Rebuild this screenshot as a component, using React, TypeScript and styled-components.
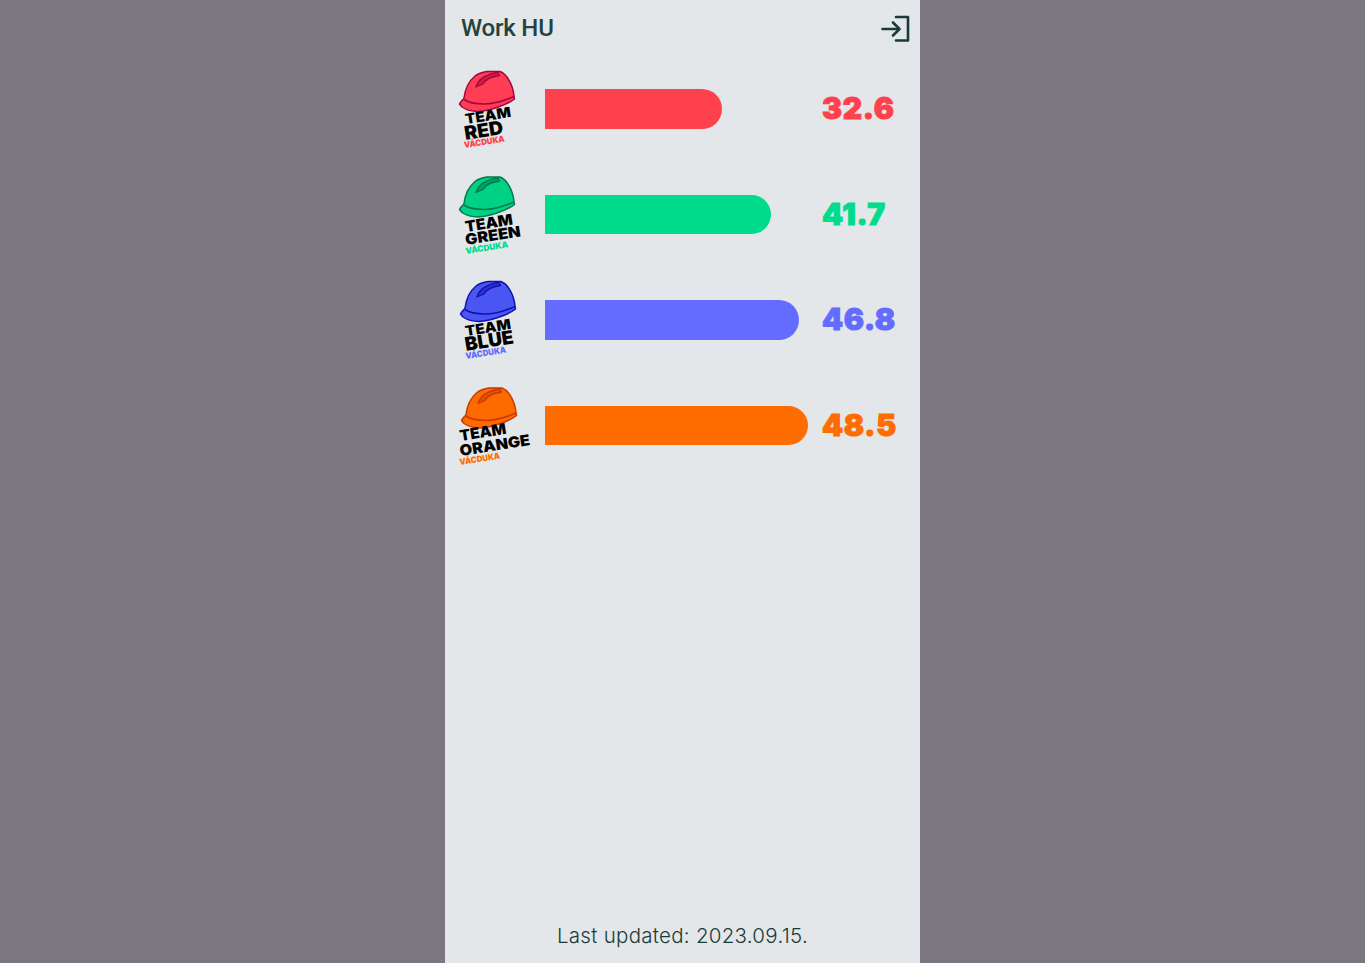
import React from "react";
import styled, { createGlobalStyle } from "styled-components";

const Global = createGlobalStyle`
  html, body { margin: 0; padding: 0; height: 100%; background: #7c7680; }
  #root { height: 100%; }
`;
const Page = styled.div`
  height: 963px;
  display: flex;
  justify-content: center;
  overflow: hidden;
`;
const Panel = styled.main`
  width: 475px;
  height: 100%;
  background: #e3e7e9;
  display: flex;
  flex-direction: column;
  color: #1b3b38;
`;
const Header = styled.header`
  height: 56px;
  display: flex;
  align-items: center;
  justify-content: space-between;
  padding: 0 10px 0 16px;
`;
const Title = styled.h1`
  margin: 0;
  font: 500 24px/1 Roboto, "Liberation Sans", sans-serif;
  letter-spacing: -0.2px;
  color: #234240;
`;
const IconButton = styled.button`
  display: flex;
  padding: 0;
  border: 0;
  background: none;
  color: inherit;
`;
const Board = styled.section`
  flex: 1;
  padding: 0.3px 14px 0;
`;
const Row = styled.div`
  height: 105.5px;
  display: grid;
  grid-template-columns: 86px 277px auto;
  align-items: center;
`;
const LogoSvg = styled.svg`
  display: block;
  width: 76px;
  height: 78px;
  overflow: visible;
`;
const BarTrack = styled.div`
  display: flex;
`;
const Bar = styled.div<{ $color: string }>`
  height: 39.5px;
  background: ${(p) => p.$color};
  border-radius: 0 20px 20px 0;
`;
const Value = styled.div<{ $color: string }>`
  color: ${(p) => p.$color};
  font: 900 30px/1 Inter, "Liberation Sans", sans-serif;
  letter-spacing: 0.7px;
  -webkit-text-stroke: 1px currentColor;
  margin-top: -2px;
`;
const Footer = styled.footer`
  height: 55px;
  text-align: center;
  font: 300 20.5px/56px Inter, Lato, sans-serif;
  letter-spacing: 0.28px;
`;
const LogoWord = styled.text`
  font-family: Inter, "Liberation Sans", sans-serif;
  font-weight: 900;
`;

type Line = { t: string; x: number; y: number; w: number; s: number; c?: string };
type Team = {
  value: number;
  color: string;
  helmet: string;
  dark: string;
  hx: number;
  hy: number;
  lines: Line[];
};

const teams: Team[] = [
  {
    value: 32.6, color: "#ff414d", helmet: "#ff3d55", dark: "#a5063e", hx: 0, hy: 1,
    lines: [
      { t: "TEAM", x: 7, y: 54, w: 46, s: 14 },
      { t: "RED", x: 6.5, y: 70, w: 39, s: 19 },
      { t: "VÁCDUKA", x: 5.5, y: 78, w: 41, s: 8.5, c: "#ff414d" },
    ],
  },
  {
    value: 41.7, color: "#00dc8c", helmet: "#00d184", dark: "#04784f", hx: 0, hy: 0.5,
    lines: [
      { t: "TEAM", x: 7, y: 56, w: 48, s: 15 },
      { t: "GREEN", x: 7, y: 69, w: 56, s: 15 },
      { t: "VÁCDUKA", x: 7, y: 78, w: 43, s: 8.5, c: "#00dc8c" },
    ],
  },
  {
    value: 46.8, color: "#646cff", helmet: "#4a56f2", dark: "#1212b0", hx: 1, hy: 0,
    lines: [
      { t: "TEAM", x: 7, y: 55, w: 46, s: 14 },
      { t: "BLUE", x: 7, y: 70, w: 49, s: 19 },
      { t: "VÁCDUKA", x: 7, y: 78, w: 41, s: 8.5, c: "#646cff" },
    ],
  },
  {
    value: 48.5, color: "#ff6d00", helmet: "#ff6a00", dark: "#c83a02", hx: 2, hy: 0.5,
    lines: [
      { t: "TEAM", x: 1.5, y: 54, w: 47, s: 15 },
      { t: "ORANGE", x: 1.5, y: 69, w: 71, s: 15 },
      { t: "VÁCDUKA", x: 1, y: 78, w: 41, s: 8.5, c: "#ff6d00" },
    ],
  },
];

const TeamLogo = ({ team }: { team: Team }) => (
  <LogoSvg viewBox="0 0 76 78" aria-hidden="true">
    <g transform={`translate(${team.hx} ${team.hy})`} stroke={team.dark} strokeWidth="1.5" strokeLinejoin="round">
      <path
        fill={team.helmet}
        d="M0.5 33C2 30 4 29 5 27C6 19 10 10 16 5C20 2 25 1 28 0.5L41 0.5C48 3 54 14 55 25L55.5 28C48 34 30 40 19 40.5C13 40.5 6 38 3 36Z"
      />
      <path fill="none" strokeWidth="1.7" d="M5 28.5C10 32 18 33 25 33C35 33 47 29 55 25.5" />
      <path
        fill={team.dark}
        fillOpacity="0.55"
        strokeWidth="1.3"
        d="M17 16C19 9 25 3.5 39 1.5L40.5 4.5C31 6 26 9 24 13C21.5 14 19 15 17 16Z"
      />
    </g>
    {team.lines.map((l) => (
      <LogoWord
        key={l.t}
        x={0}
        y={0}
        transform={`translate(${l.x} ${l.y}) rotate(-9)`}
        fontSize={l.s}
        fill={l.c ?? "#000"}
        textLength={l.w}
        lengthAdjust="spacingAndGlyphs"
      >
        {l.t}
      </LogoWord>
    ))}
  </LogoSvg>
);

export default function App() {
  return (
    <Page>
      <Global />
      <Panel>
        <Header>
          <Title>Work HU</Title>
          <IconButton aria-label="Log in">
            <svg width="29" height="27" viewBox="0 0 29 27" fill="none" stroke="currentColor" strokeWidth="2.6" strokeLinejoin="round" strokeLinecap="round">
              <path d="M15 2H27V25.5H15" />
              <path d="M1.5 14H18" />
              <path d="M12 7.5L18.5 14L12 20.5" />
            </svg>
          </IconButton>
        </Header>
        <Board>
          {teams.map((team) => (
            <Row key={team.color}>
              <TeamLogo team={team} />
              <BarTrack>
                <Bar $color={team.color} style={{ width: `${team.value * 5.42}px` }} />
              </BarTrack>
              <Value $color={team.color}>{team.value.toFixed(1)}</Value>
            </Row>
          ))}
        </Board>
        <Footer>Last updated: 2023.09.15.</Footer>
      </Panel>
    </Page>
  );
}
